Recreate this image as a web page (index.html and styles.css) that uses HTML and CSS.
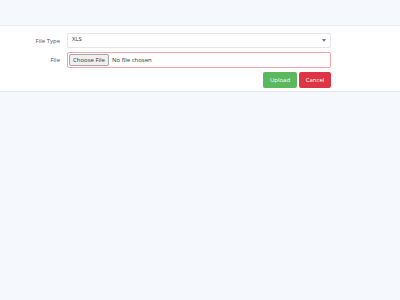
FILE: index.html
```html
<!DOCTYPE html>
<html>
<head>
<meta charset="utf-8">
<link rel="stylesheet" href="styles.css">
</head>
<body>
<div class="top"></div>
<div class="panel">
  <form class="form">
    <div class="label">File Type</div>
    <div class="select">
      <span>XLS</span>
      <svg class="caret" width="4" height="3" viewBox="0 0 4 3"><path d="M0 0h4L2 3z" fill="#777"/></svg>
    </div>
    <div class="label">File</div>
    <div class="file">
      <span class="choose">Choose File</span>
      <span class="none">No file chosen</span>
    </div>
    <div></div>
    <div class="actions">
      <button type="button" class="btn upload">Upload</button>
      <button type="button" class="btn cancel">Cancel</button>
    </div>
  </form>
</div>
</body>
</html>
```
FILE: styles.css
```css
html, body {
  margin: 0;
  background: #f5f8fd;
  font-family: "Open Sans", "Noto Sans", sans-serif;
  font-size: 6px;
  color: #444;
}
.top {
  height: 25px;
}
.panel {
  background: #fff;
  border-top: 1px solid #e9ecf1;
  border-bottom: 1px solid #e6e9ee;
  padding: 7px 0 3px;
}
.form {
  display: grid;
  grid-template-columns: 60px 264px;
  column-gap: 7px;
  row-gap: 4px;
  align-items: center;
}
.label {
  text-align: right;
  color: #555;
}
.select {
  height: 15px;
  box-sizing: border-box;
  border: 1px solid #e3e6ea;
  border-radius: 2px;
  display: flex;
  align-items: center;
  justify-content: space-between;
  padding: 0 4px 0 4px;
  color: #333;
}
.select span {
  position: relative;
  top: -2px;
}
.file {
  height: 16px;
  box-sizing: border-box;
  border: 1px solid #f5a3a6;
  border-radius: 2px;
  display: flex;
  align-items: center;
  padding: 0 1px;
  gap: 3px;
}
.choose {
  display: inline-flex;
  align-items: center;
  height: 12px;
  box-sizing: border-box;
  padding: 0 3px;
  background: #efefef;
  border: 1px solid #a8a8a8;
  border-radius: 2px;
  color: #333;
}
.none {
  color: #333;
}
.actions {
  display: flex;
  justify-content: flex-end;
  gap: 2px;
}
.btn {
  height: 16px;
  border: none;
  border-radius: 2px;
  color: #fff;
  font-family: inherit;
  font-size: 6px;
  padding: 0;
}
.upload {
  width: 34px;
  background: #5cb85c;
}
.cancel {
  width: 32px;
  background: #dc3545;
}
```
